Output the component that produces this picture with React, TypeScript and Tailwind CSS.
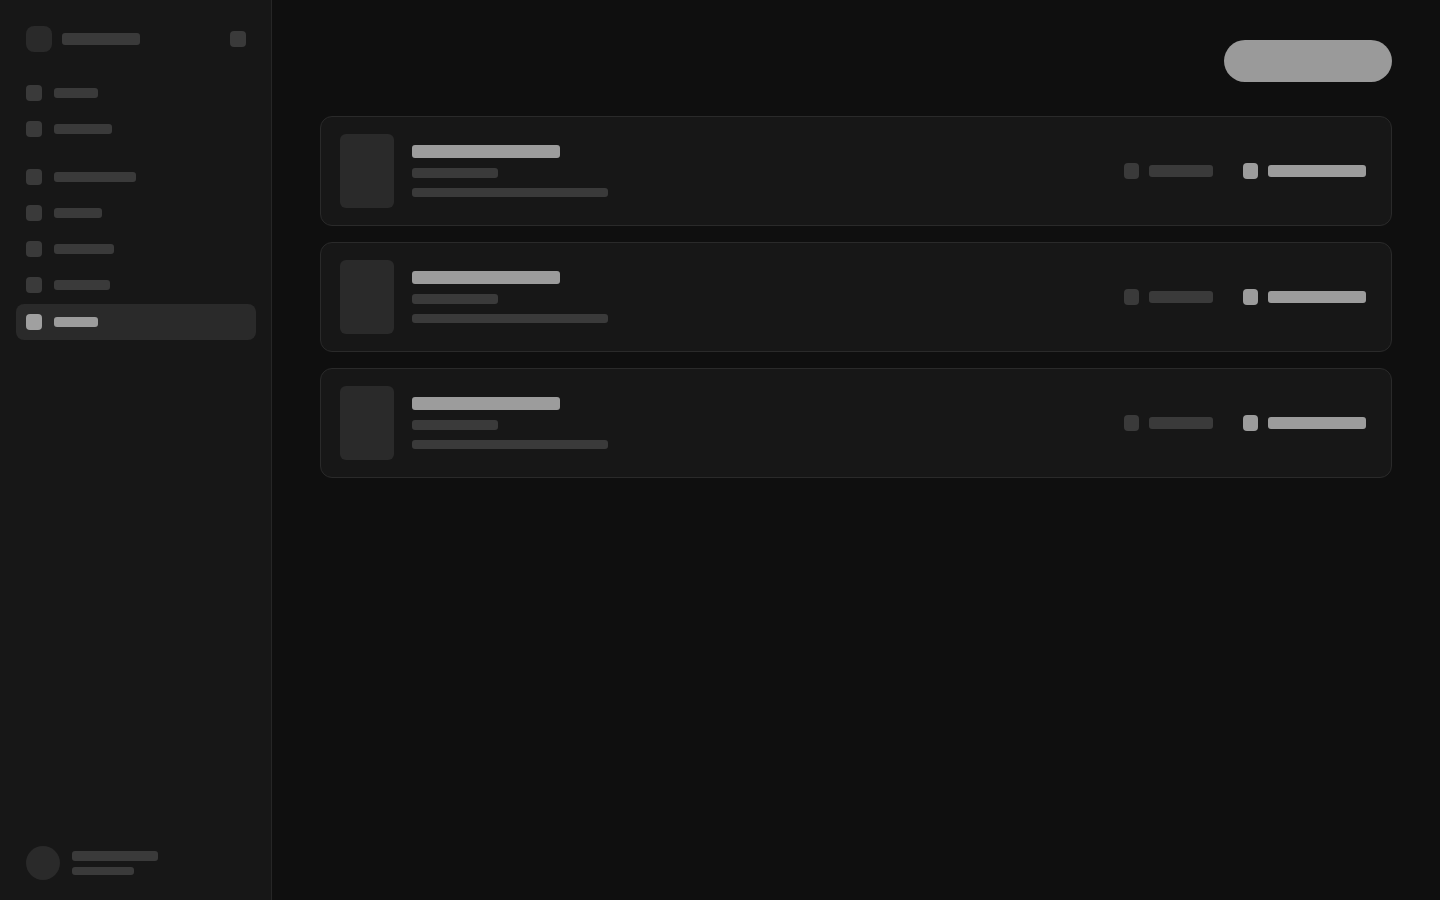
import React from "react";

type NavItem = { w: number; active?: boolean };

const groupA: NavItem[] = [{ w: 44 }, { w: 58 }];
const groupB: NavItem[] = [{ w: 82 }, { w: 48 }, { w: 60 }, { w: 56 }, { w: 44, active: true }];

function Bar({ w, h, light }: { w: number; h: number; light?: boolean }) {
  return (
    <div
      className={`rounded-[3px] ${light ? "bg-[#9c9c9c]" : "bg-[#3a3a3a]"}`}
      style={{ width: w, height: h }}
    />
  );
}

function NavRow({ item }: { item: NavItem }) {
  return (
    <div
      className={`flex h-9 items-center gap-3 rounded-lg px-[10px] ${
        item.active ? "mt-px bg-[#2a2a2a]" : ""
      }`}
    >
      <div
        className={`h-4 w-4 rounded-[4px] ${item.active ? "bg-[#a0a0a0]" : "bg-[#3a3a3a]"}`}
      />
      <Bar w={item.w} h={10} light={item.active} />
    </div>
  );
}

function Card() {
  return (
    <div className="flex h-[110px] items-center rounded-xl border border-[#2a2a2a] bg-[#171717] pl-[19px] pr-[25px]">
      <div className="h-[74px] w-[54px] rounded-md bg-[#2a2a2a]" />
      <div className="ml-[18px] flex flex-col">
        <Bar w={148} h={13} light />
        <div className="mt-[10px]">
          <Bar w={86} h={10} />
        </div>
        <div className="mt-[10px]">
          <Bar w={196} h={9} />
        </div>
      </div>
      <div className="ml-auto flex items-center">
        <div className="h-4 w-[15px] rounded-[4px] bg-[#3a3a3a]" />
        <div className="ml-[10px]">
          <Bar w={64} h={12} />
        </div>
        <div className="ml-[30px] h-4 w-[15px] rounded-[4px] bg-[#9c9c9c]" />
        <div className="ml-[10px]">
          <Bar w={98} h={12} light />
        </div>
      </div>
    </div>
  );
}

export default function App() {
  return (
    <div className="flex h-[900px] w-full bg-[#0f0f0f] font-['Inter',sans-serif]">
      <aside className="flex w-[272px] shrink-0 flex-col border-r border-[#262626] bg-[#171717] py-4 pl-4 pr-[15px] pb-5">
        <div className="flex items-center px-[10px] pt-[10px]">
          <div className="h-[26px] w-[26px] rounded-lg bg-[#2a2a2a]" />
          <div className="ml-[10px]">
            <Bar w={78} h={12} />
          </div>
          <div className="ml-auto h-4 w-4 rounded-[4px] bg-[#3a3a3a]" />
        </div>

        <nav className="mt-[23px] flex flex-col">
          {groupA.map((it, i) => (
            <NavRow key={i} item={it} />
          ))}
          <div className="h-3" />
          {groupB.map((it, i) => (
            <NavRow key={i} item={it} />
          ))}
        </nav>

        <div className="mt-auto flex items-center px-[10px]">
          <div className="h-[34px] w-[34px] rounded-full bg-[#2a2a2a]" />
          <div className="ml-3 flex flex-col gap-[6px]">
            <Bar w={86} h={10} />
            <Bar w={62} h={8} />
          </div>
        </div>
      </aside>

      <main className="flex-1 px-12 pt-10">
        <div className="flex justify-end">
          <div className="h-[42px] w-[168px] rounded-full bg-[#9a9a9a]" />
        </div>
        <div className="mt-[34px] flex flex-col gap-4">
          <Card />
          <Card />
          <Card />
        </div>
      </main>
    </div>
  );
}
